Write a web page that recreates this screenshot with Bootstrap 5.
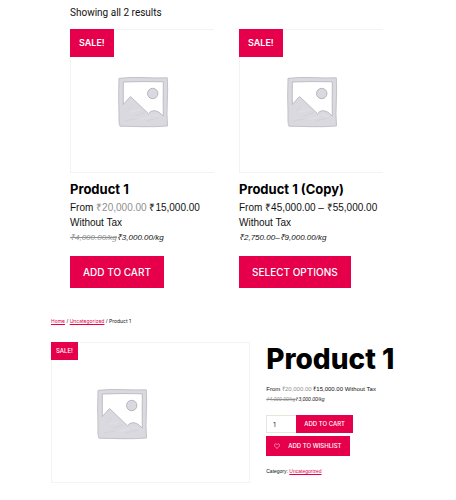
<!DOCTYPE html>
<html lang="en">
<head>
<meta charset="utf-8">
<meta name="viewport" content="width=device-width, initial-scale=1">
<title>Product 1</title>
<link href="https://cdn.jsdelivr.net/npm/bootstrap@5.3.0/dist/css/bootstrap.min.css" rel="stylesheet">
<style>
:root { --accent: #e6004c; }
body { font-family: "Liberation Sans", Arial, sans-serif; font-size: 10px; line-height: 15px; color: #111; background: #fff; }
.inter { font-family: Inter, sans-serif; }
.shop { padding: 5px 73px 0 70px; }
.result-count { font-family: Roboto, sans-serif; font-size: 10px; line-height: 16px; margin-bottom: 8px; }
.product-grid { --bs-gutter-x: 25px; }
.frame { border: 1px solid #f3f3f3; }
.thumb { border-right: 0; height: 144px; padding-top: 2px; }
.thumb svg, .gallery svg { width: 52px; height: 52px; }
.sale { background: var(--accent); color: #fff; font-weight: 600; font-size: 9px; line-height: 28px; padding: 0 9px; margin: -1px; }
.product-title { font-size: 13px; line-height: 18px; font-weight: 700; color: #000; margin: 7px 0 2px; }
.unit { font-size: 8px; line-height: 16px; font-style: italic; }
del { color: #8f8f8f; }
.was { text-decoration: none; }
.btn-shop { background: var(--accent); color: #fff; border: 0; border-radius: 0; font-weight: 500; font-size: 10px; line-height: 16px; padding: 8px 13px; margin-top: 10px; }
.btn-shop:hover, .btn-shop:focus { background: #c40041; color: #fff; }
.detail { padding: 27px 52px 0 51px; }
.crumbs { font-family: Inter, sans-serif; font-size: 5px; line-height: 12px; margin-bottom: 15px; }
a { color: var(--accent); }
a:hover { color: #c40041; }
.detail-row { --bs-gutter-x: 16px; }
.gallery { height: 141px; padding-top: 2px; }
.gallery svg { margin: 0 0 0 44px; }
.gallery .sale { font-size: 6px; font-weight: 500; line-height: 18px; padding: 0 5px; }
.summary-title { font-size: 28px; line-height: 34px; font-weight: 800; color: #000; margin-bottom: 8px; }
.summary-price { font-size: 6px; line-height: 10px; }
.summary-unit { font-size: 5px; line-height: 10px; font-style: italic; margin-bottom: 11px; }
.qty { width: 30px; height: 18px; border: 1px solid #e8e5dc; border-right: 0; border-radius: 0; padding: 0 6px; font-size: 6px; line-height: 14px; color: #111; }
.btn-cart { font-size: 6px; line-height: 18px; padding: 0 8px; margin: 0; }
.btn-wish { font-size: 6px; line-height: 20px; padding: 0 8px; margin: 3px 0 10px; }
.btn-wish svg { width: 6px; height: 6px; }
.meta { font-size: 5px; line-height: 10px; }
</style>
<script src="https://cdn.jsdelivr.net/npm/bootstrap@5.3.0/dist/js/bootstrap.bundle.min.js"></script>
</head>
<body>
<svg class="d-none" aria-hidden="true">
  <symbol id="placeholder" viewBox="0 0 52 52">
    <path d="M2 2.300 Q14 1 26 1.600 T50.300 1.800 Q51 14 50.300 26 T50.500 50 Q38 51 26 50.700 T3 50.200 Q1.600 48 2 38 Q1.300 20 2 2.300Z" fill="#dad9e0" stroke="#b8b7bd" stroke-width=".8"/>
    <path d="M6.300 6 Q26 5.200 46.300 5.800 Q46 24 46.300 40 L42 36.200 Q38 33.500 34 35.300 L31.500 37.700 L13.500 20.500 L6.300 28.500Z" fill="#fff" stroke="#b2b1b7" stroke-width=".8" stroke-linejoin="round"/>
    <circle cx="35.700" cy="17.500" r="5.200" fill="#dad9e0" stroke="#a9a8ae" stroke-width=".8"/>
    <path d="M11 34 L16 29 M18 40 L27 37 M8 45 L18 43 M30 45 L41 42" fill="none" stroke="#d3d2d9" stroke-width="1" stroke-linecap="round"/>
    <path d="M14 36 L22 34 M24 43 L33 41 M36 39 L41 40" fill="none" stroke="#dfdee4" stroke-width="1.500" stroke-linecap="round"/>
  </symbol>
</svg>

<main>
  <section class="shop">
    <p class="result-count">Showing all 2 results</p>
    <div class="row product-grid">
      <article class="col-6">
        <div class="thumb frame position-relative d-flex align-items-center justify-content-center">
          <span class="sale inter position-absolute top-0 start-0">SALE!</span>
          <svg role="img" aria-label="Placeholder"><use href="#placeholder"/></svg>
        </div>
        <h2 class="product-title inter text-nowrap">Product 1</h2>
        <div>From <del class="was">₹20,000.00</del> ₹15,000.00<br>Without Tax</div>
        <div class="unit text-nowrap"><del>₹4,000.00/kg</del>₹3,000.00/kg</div>
        <button type="button" class="btn btn-shop inter text-nowrap">ADD TO CART</button>
      </article>
      <article class="col-6">
        <div class="thumb frame position-relative d-flex align-items-center justify-content-center">
          <span class="sale inter position-absolute top-0 start-0">SALE!</span>
          <svg role="img" aria-label="Placeholder"><use href="#placeholder"/></svg>
        </div>
        <h2 class="product-title inter text-nowrap">Product 1 (Copy)</h2>
        <div>From ₹45,000.00 – ₹55,000.00<br>Without Tax</div>
        <div class="unit text-nowrap">₹2,750.00–₹9,000.00/kg</div>
        <button type="button" class="btn btn-shop inter text-nowrap">SELECT OPTIONS</button>
      </article>
    </div>
  </section>

  <section class="detail">
    <nav class="crumbs" aria-label="Breadcrumb"><a href="#">Home</a> / <a href="#">Uncategorized</a> / Product 1</nav>
    <div class="row detail-row">
      <div class="col-7">
        <div class="gallery frame position-relative d-flex align-items-center">
          <span class="sale inter position-absolute top-0 start-0">SALE!</span>
          <svg role="img" aria-label="Placeholder"><use href="#placeholder"/></svg>
        </div>
      </div>
      <div class="col-5 text-nowrap">
        <h1 class="summary-title inter">Product 1</h1>
        <div class="summary-price">From <del class="was">₹20,000.00</del> ₹15,000.00 Without Tax</div>
        <div class="summary-unit"><del>₹4,000.00/kg</del>₹3,000.00/kg</div>
        <form class="d-flex">
          <label class="visually-hidden" for="qty">Quantity</label>
          <input id="qty" class="qty inter" type="text" inputmode="numeric" value="1">
          <button type="button" class="btn btn-shop btn-cart inter">ADD TO CART</button>
        </form>
        <button type="button" class="btn btn-shop btn-wish inter d-flex align-items-center gap-2">
          <svg viewBox="0 0 12 12" fill="none" stroke="#fff" stroke-width="1" aria-hidden="true"><path d="M6 11 C3 8.500 1 6.700 1 4.200 C1 1 4.700 .6 6 3.200 C7.300 .6 11 1 11 4.200 C11 6.700 9 8.500 6 11Z"/></svg>ADD TO WISHLIST</button>
        <div class="meta">Category: <a href="#">Uncategorized</a></div>
      </div>
    </div>
  </section>
</main>
</body>
</html>
